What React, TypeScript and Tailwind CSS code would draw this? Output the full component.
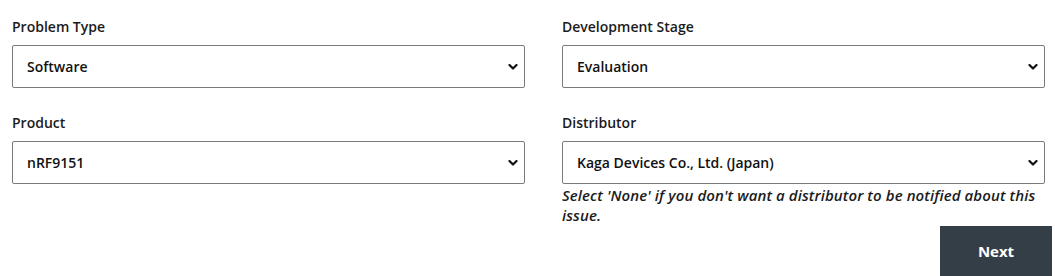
import React from 'react';

const font = { fontFamily: '"Open Sans", Lato, sans-serif' };

function Chevron() {
  return (
    <svg className="pointer-events-none absolute right-[7px] top-1/2 -translate-y-1/2" width="10" height="7" viewBox="0 0 10 7">
      <path d="M1.5 1.5 L5 5 L8.5 1.5" fill="none" stroke="#111" strokeWidth="2.2" strokeLinecap="round" strokeLinejoin="round" />
    </svg>
  );
}

function Field({ label, value, children }: { label: string; value: string; children?: React.ReactNode }) {
  return (
    <div className="flex flex-col">
      <label className="h-[20px] mb-[8px] text-[14px] leading-[20px] font-semibold text-[#1b1b1b]">{label}</label>
      <div className="relative">
        <select
          defaultValue={value}
          className="appearance-none w-full h-[43px] border border-[#7a7a7a] rounded-[2px] bg-white pl-[14px] pr-8 text-[14px] font-semibold text-[#111]"
          style={font}
        >
          <option>{value}</option>
        </select>
        <Chevron />
      </div>
      {children}
    </div>
  );
}

export default function App() {
  return (
    <div className="w-[1055px] h-[276px] bg-white overflow-hidden" style={font}>
      <div className="grid grid-cols-[513px_483px] gap-x-[37px] gap-y-[25px] pl-[12px] pt-[17px]">
        <Field label="Problem Type" value="Software" />
        <Field label="Development Stage" value="Evaluation" />
        <Field label="Product" value="nRF9151" />
        <Field label="Distributor" value="Kaga Devices Co., Ltd. (Japan)">
          <p className="mt-[1px] text-[15px] leading-[20px] italic font-semibold tracking-[0.1px] text-[#1b1b1b]">
            Select 'None' if you don't want a distributor to be notified about this issue.
          </p>
        </Field>
      </div>
      <div className="flex justify-end pr-[3px] mt-[1px]">
        <button className="w-[112px] h-[50px] bg-[#343e47] text-white text-[15px] font-bold">Next</button>
      </div>
    </div>
  );
}
